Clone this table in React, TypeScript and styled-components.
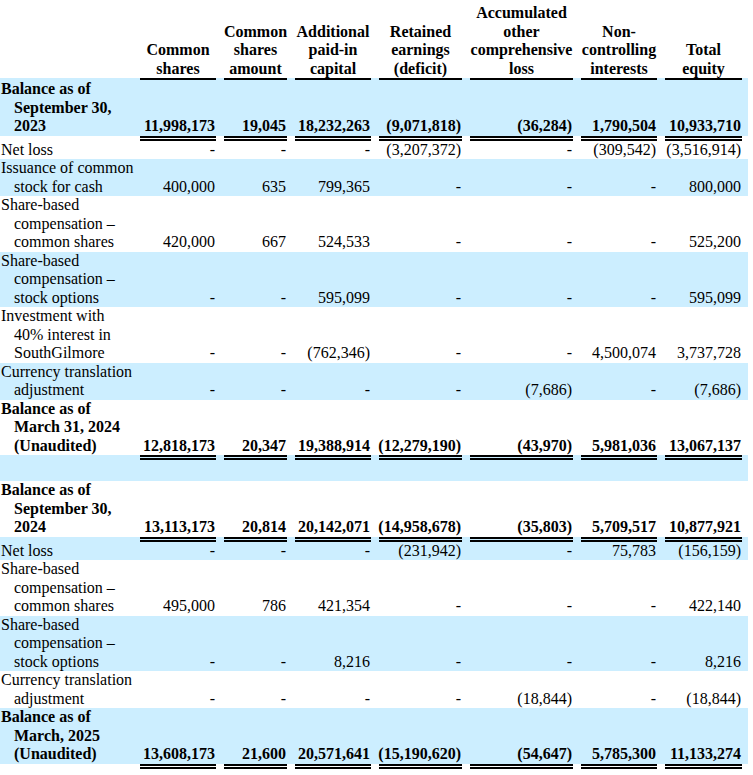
import React from "react";
import styled, { createGlobalStyle, css } from "styled-components";

const GlobalStyle = createGlobalStyle`
  html, body {
    margin: 0;
    padding: 0;
    background: #ffffff;
  }
  body {
    font-family: "Liberation Serif", "Times New Roman", serif;
    font-size: 16px;
    line-height: 18.5px;
    color: #000000;
  }
`;

type Tone = "blue" | "white";
type Rule = "none" | "single" | "double";

const BLUE = "#CCEEFF";

const ruleWidth = (r: Rule) => (r === "single" ? 2 : r === "double" ? 5 : 0);

const Sheet = styled.div`
  width: 748px;
  display: flex;
  flex-direction: column;
`;

const gridCols = css`
  display: grid;
  grid-template-columns: 132px 76px 63px 76px 83px 103px 76px 77px;
  column-gap: 8px;
  padding-right: 6px;
`;

const HeaderRow = styled.div`
  ${gridCols};
  padding-top: 4px;
  height: 74px;
  background: #ffffff;
`;

const HeadCell = styled.div`
  display: flex;
  flex-direction: column;
  justify-content: flex-end;
  align-items: center;
  text-align: center;
  font-weight: 700;
  white-space: nowrap;
`;

const Row = styled.div<{ $tone: Tone; $bold?: boolean }>`
  ${gridCols};
  background: ${(p) => (p.$tone === "blue" ? BLUE : "#ffffff")};
  font-weight: ${(p) => (p.$bold ? 700 : 400)};
`;

const Label = styled.div<{ $rule: Rule }>`
  padding-top: ${(p) => ruleWidth(p.$rule)}px;
  padding-left: 1px;
  white-space: nowrap;
`;

const LabelLine = styled.span<{ $indent?: boolean }>`
  display: block;
  padding-left: ${(p) => (p.$indent ? 13 : 0)}px;
`;

const Value = styled.div<{ $rule: Rule }>`
  display: flex;
  align-items: flex-end;
  justify-content: flex-end;
  white-space: nowrap;
  padding-right: 1px;
  border-top: ${(p) =>
    p.$rule === "single"
      ? "2px solid #000"
      : p.$rule === "double"
      ? "5px double #000"
      : "none"};
`;

const BlankRow = styled(Row)`
  height: 26px;
`;

const ClosingRule = styled.div`
  ${gridCols};
  background: #ffffff;
`;

const RuleCell = styled.div`
  border-top: 5px double #000;
`;

const headers: string[][] = [
  ["Common", "shares"],
  ["Common", "shares", "amount"],
  ["Additional", "paid-in", "capital"],
  ["Retained", "earnings", "(deficit)"],
  ["Accumulated", "other", "comprehensive", "loss"],
  ["Non-", "controlling", "interests"],
  ["Total", "equity"],
];

type RowData = {
  tone: Tone;
  bold?: boolean;
  rule: Rule;
  label: string[];
  values: string[];
};

const rowsA: RowData[] = [
  {
    tone: "blue",
    bold: true,
    rule: "single",
    label: ["Balance as of", "September 30,", "2023"],
    values: ["11,998,173", "19,045", "18,232,263", "(9,071,818)", "(36,284)", "1,790,504", "10,933,710"],
  },
  {
    tone: "white",
    rule: "double",
    label: ["Net loss"],
    values: ["-", "-", "-", "(3,207,372)", "-", "(309,542)", "(3,516,914)"],
  },
  {
    tone: "blue",
    rule: "none",
    label: ["Issuance of common", "stock for cash"],
    values: ["400,000", "635", "799,365", "-", "-", "-", "800,000"],
  },
  {
    tone: "white",
    rule: "none",
    label: ["Share-based", "compensation \u2013", "common shares"],
    values: ["420,000", "667", "524,533", "-", "-", "-", "525,200"],
  },
  {
    tone: "blue",
    rule: "none",
    label: ["Share-based", "compensation \u2013", "stock options"],
    values: ["-", "-", "595,099", "-", "-", "-", "595,099"],
  },
  {
    tone: "white",
    rule: "none",
    label: ["Investment with", "40% interest in", "SouthGilmore"],
    values: ["-", "-", "(762,346)", "-", "-", "4,500,074", "3,737,728"],
  },
  {
    tone: "blue",
    rule: "none",
    label: ["Currency translation", "adjustment"],
    values: ["-", "-", "-", "-", "(7,686)", "-", "(7,686)"],
  },
  {
    tone: "white",
    bold: true,
    rule: "none",
    label: ["Balance as of", "March 31, 2024", "(Unaudited)"],
    values: ["12,818,173", "20,347", "19,388,914", "(12,279,190)", "(43,970)", "5,981,036", "13,067,137"],
  },
];

const rowsB: RowData[] = [
  {
    tone: "white",
    bold: true,
    rule: "none",
    label: ["Balance as of", "September 30,", "2024"],
    values: ["13,113,173", "20,814", "20,142,071", "(14,958,678)", "(35,803)", "5,709,517", "10,877,921"],
  },
  {
    tone: "blue",
    rule: "double",
    label: ["Net loss"],
    values: ["-", "-", "-", "(231,942)", "-", "75,783", "(156,159)"],
  },
  {
    tone: "white",
    rule: "none",
    label: ["Share-based", "compensation \u2013", "common shares"],
    values: ["495,000", "786", "421,354", "-", "-", "-", "422,140"],
  },
  {
    tone: "blue",
    rule: "none",
    label: ["Share-based", "compensation \u2013", "stock options"],
    values: ["-", "-", "8,216", "-", "-", "-", "8,216"],
  },
  {
    tone: "white",
    rule: "none",
    label: ["Currency translation", "adjustment"],
    values: ["-", "-", "-", "-", "(18,844)", "-", "(18,844)"],
  },
  {
    tone: "blue",
    bold: true,
    rule: "none",
    label: ["Balance as of", "March, 2025", "(Unaudited)"],
    values: ["13,608,173", "21,600", "20,571,641", "(15,190,620)", "(54,647)", "5,785,300", "11,133,274"],
  },
];

const DataRow: React.FC<{ row: RowData }> = ({ row }) => (
  <Row $tone={row.tone} $bold={row.bold}>
    <Label $rule={row.rule}>
      {row.label.map((line, i) => (
        <LabelLine key={i} $indent={i > 0}>
          {line}
        </LabelLine>
      ))}
    </Label>
    {row.values.map((v, i) => (
      <Value key={i} $rule={row.rule}>
        {v}
      </Value>
    ))}
  </Row>
);

export default function App() {
  return (
    <>
      <GlobalStyle />
      <Sheet>
        <HeaderRow>
          <div />
          {headers.map((lines, i) => (
            <HeadCell key={i}>
              {lines.map((l, j) => (
                <span key={j}>{l}</span>
              ))}
            </HeadCell>
          ))}
        </HeaderRow>
        {rowsA.map((r, i) => (
          <DataRow key={`a${i}`} row={r} />
        ))}
        <BlankRow $tone="blue">
          <Label $rule="double" />
          {headers.map((_, i) => (
            <Value key={i} $rule="double" />
          ))}
        </BlankRow>
        {rowsB.map((r, i) => (
          <DataRow key={`b${i}`} row={r} />
        ))}
        <ClosingRule>
          <div />
          {headers.map((_, i) => (
            <RuleCell key={i} />
          ))}
        </ClosingRule>
      </Sheet>
    </>
  );
}
